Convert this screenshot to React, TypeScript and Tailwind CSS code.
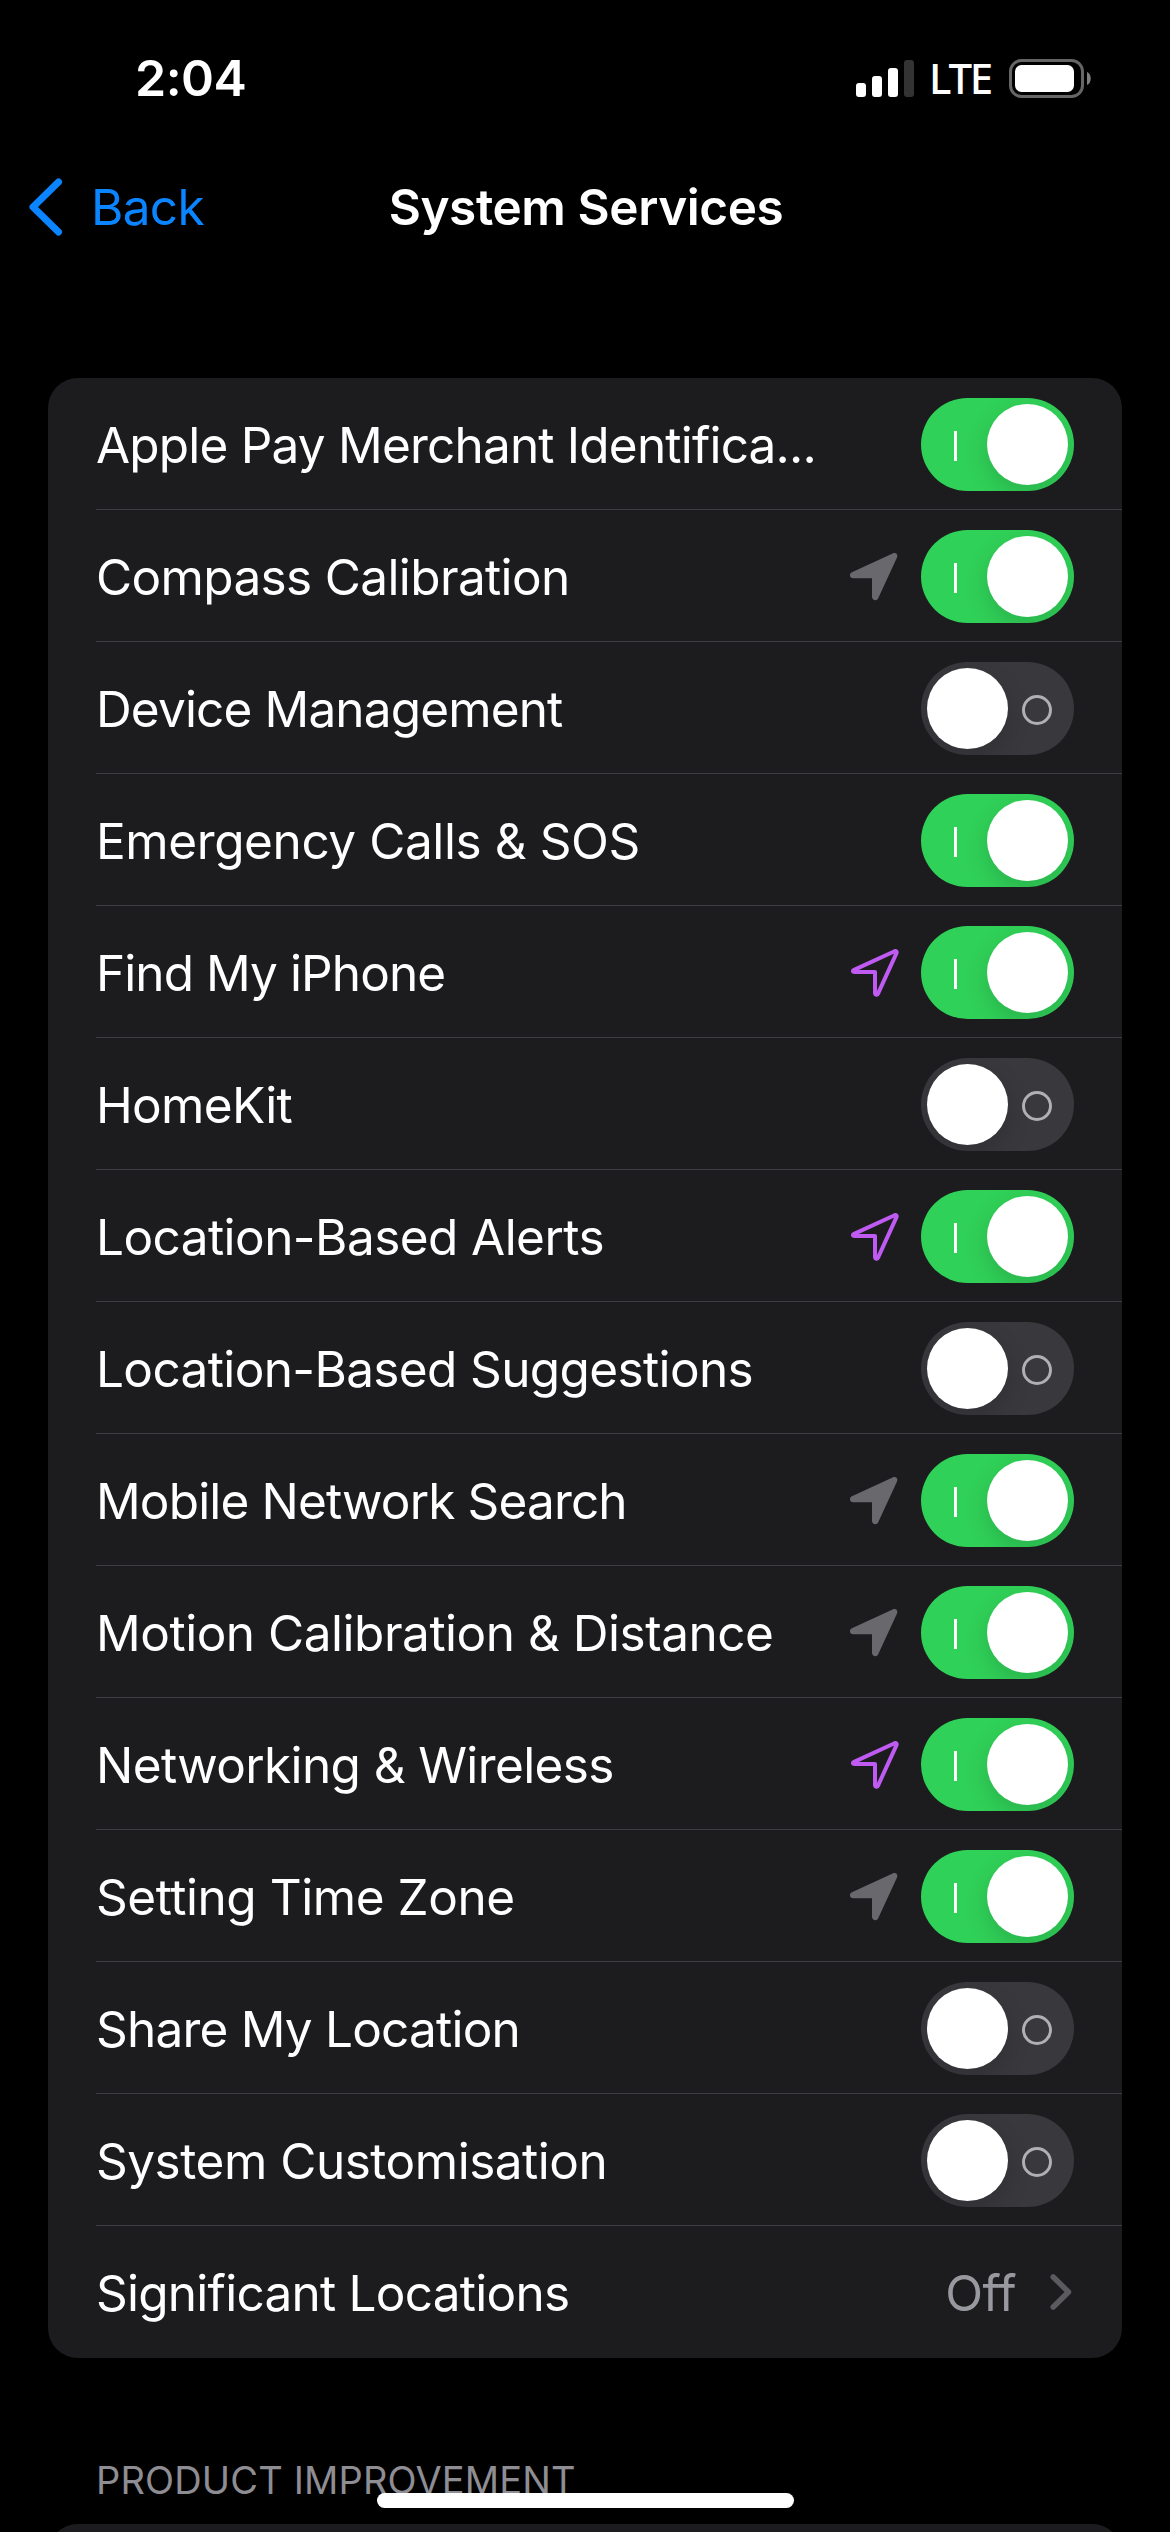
type Arrow = "none" | "gray" | "purple";

interface Service {
  label: string;
  tracking: string;
  on: boolean;
  arrow?: Arrow;
}

const services: Service[] = [
  { label: "Apple Pay Merchant Identifica...", tracking: "tracking-[-0.8px]", on: true },
  { label: "Compass Calibration", tracking: "tracking-[-0.64px]", on: true, arrow: "gray" },
  { label: "Device Management", tracking: "tracking-[-0.85px]", on: false },
  { label: "Emergency Calls & SOS", tracking: "tracking-[-0.41px]", on: true },
  { label: "Find My iPhone", tracking: "tracking-[-0.92px]", on: true, arrow: "purple" },
  { label: "HomeKit", tracking: "tracking-[-0.7px]", on: false },
  { label: "Location-Based Alerts", tracking: "tracking-[-0.56px]", on: true, arrow: "purple" },
  { label: "Location-Based Suggestions", tracking: "tracking-[-0.63px]", on: false },
  { label: "Mobile Network Search", tracking: "tracking-[-0.85px]", on: true, arrow: "gray" },
  { label: "Motion Calibration & Distance", tracking: "tracking-[-0.48px]", on: true, arrow: "gray" },
  { label: "Networking & Wireless", tracking: "tracking-[-0.62px]", on: true, arrow: "purple" },
  { label: "Setting Time Zone", tracking: "tracking-[-0.45px]", on: true, arrow: "gray" },
  { label: "Share My Location", tracking: "tracking-[-0.79px]", on: false },
  { label: "System Customisation", tracking: "tracking-[-0.48px]", on: false },
];

function LocationArrow({ kind }: { kind: Arrow }) {
  if (kind === "gray") {
    return (
      <svg className="mr-[23px] mt-[3px] h-12 w-12 shrink-0" viewBox="0 0 48 48" fill="#69686d">
        <path d="M1.9 19.300 42.600.4c3.200-1.400 5.800 1 4.300 4.300L28.200 45.200c-1.500 3.200-6.200 2.400-6.200-1.500V25.200H3.100C-.7 25.200-1 20.700 1.900 19.300Z" />
      </svg>
    );
  }
  return (
    <svg
      className="mr-[22px] mt-[3px] h-12 w-12 shrink-0"
      viewBox="0 0 48 48"
      fill="none"
      stroke="#bf5af2"
      strokeWidth="4"
      strokeLinejoin="round"
    >
      <path d="M3.100 20.900 43.600 2.200c1.400-.6 2.500.4 1.900 1.900L26.900 44.800c-.8 1.600-2.900 1.100-2.900-.7V23H3.400c-1.800 0-1.900-1.400-.3-2.100Z" />
    </svg>
  );
}

function Toggle({ on }: { on: boolean }) {
  if (on) {
    return (
      <div className="mt-0.5 flex h-[93px] w-[153px] shrink-0 items-center justify-between overflow-hidden rounded-full bg-[#30d158] pl-[33px] pr-1.5">
        <span className="mt-[3px] h-[30px] w-[3px] bg-white" />
        <span className="h-[81px] w-[81px] rounded-full bg-white shadow-[0_9px_24px_rgba(0,0,0,0.15)]" />
      </div>
    );
  }
  return (
    <div className="mt-0.5 flex h-[93px] w-[153px] shrink-0 items-center justify-between overflow-hidden rounded-full bg-[#39383d] pl-1.5 pr-[22px]">
      <span className="h-[81px] w-[81px] rounded-full bg-white shadow-[0_9px_24px_rgba(0,0,0,0.15)]" />
      <span className="mt-[3px] h-[30px] w-[30px] rounded-full border-[3px] border-[#b0b0b2]" />
    </div>
  );
}

function ServiceRow({ label, tracking, on, arrow = "none" }: Service) {
  return (
    <li className="ml-12 flex h-[132px] items-center border-b border-[#3d3d41] pr-12">
      <span className={`mt-[3px] grow whitespace-nowrap text-[49.5px] leading-[60px] ${tracking}`}>{label}</span>
      {arrow !== "none" && <LocationArrow kind={arrow} />}
      <Toggle on={on} />
    </li>
  );
}

function StatusBar() {
  return (
    <header className="flex h-[156px] shrink-0 items-center justify-between pl-[135px] pr-[78px]">
      <span className="text-[50px] font-semibold leading-[60px] tracking-[-0.5px]">2:04</span>
      <div className="flex items-center">
        <div className="flex h-[37px] items-end gap-1.5">
          <span className="h-[14px] w-[10px] rounded-[3px] bg-white" />
          <span className="h-[21px] w-[10px] rounded-[3px] bg-white" />
          <span className="h-[29px] w-[10px] rounded-[3px] bg-white" />
          <span className="h-[37px] w-[10px] rounded-[3px] bg-[#333333]" />
        </div>
        <span className="ml-[15px] w-[80px] font-['Noto_Sans',sans-serif] text-[42px] font-medium leading-[60px] tracking-[-2.2px]">
          LTE
        </span>
        <svg className="h-[39px] w-[83px]" viewBox="0 0 83 39">
          <rect x="1.500" y="1.500" width="72" height="36" rx="11" fill="none" stroke="#666" strokeWidth="3" />
          <rect x="6" y="6" width="59" height="27" rx="6.500" fill="#fff" />
          <path d="M78 13c5 2 5 11 0 13Z" fill="#7f7f7f" />
        </svg>
      </div>
    </header>
  );
}

function NavBar() {
  return (
    <nav className="grid h-[102px] shrink-0 grid-cols-[1fr_auto_1fr] items-center">
      <a className="flex items-center pl-[29px] text-[#0a84ff]">
        <svg
          className="h-[58px] w-[34px]"
          viewBox="0 0 34 58"
          fill="none"
          stroke="#0a84ff"
          strokeWidth="7"
          strokeLinecap="round"
          strokeLinejoin="round"
        >
          <path d="M29.500 4 4 29l25.500 25" />
        </svg>
        <span className="ml-7 text-[49.5px] leading-[60px] tracking-[-0.67px]">Back</span>
      </a>
      <h1 className="pl-0.5 text-[49.5px] font-semibold leading-[60px] tracking-[-0.42px]">System Services</h1>
    </nav>
  );
}

export default function App() {
  return (
    <div className="relative flex h-[2532px] w-[1170px] flex-col overflow-hidden bg-black font-['Inter',sans-serif] text-white">
      <StatusBar />
      <NavBar />
      <main className="mt-[120px] shrink-0 px-12">
        <ul className="overflow-hidden rounded-[30px] bg-[#1c1c1e]">
          {services.map((s) => (
            <ServiceRow key={s.label} {...s} />
          ))}
          <li className="ml-12 flex h-[132px] items-center pr-[50px]">
            <span className="mt-0.5 grow text-[49.5px] leading-[60px] tracking-[-0.75px]">Significant Locations</span>
            <span className="mt-0.5 text-[49.5px] leading-[60px] tracking-[-0.6px] text-[#98989f]">Off</span>
            <svg
              className="ml-[34px] h-10 w-[22px]"
              viewBox="0 0 22 40"
              fill="none"
              stroke="#5a5a5f"
              strokeWidth="5.500"
              strokeLinecap="round"
              strokeLinejoin="round"
            >
              <path d="M3.200 5 18.500 20 3.200 35" />
            </svg>
          </li>
        </ul>
        <h2 className="mt-[98px] pl-12 text-[38px] leading-[48px] tracking-[0.15px] text-[#8d8d93]">
          PRODUCT IMPROVEMENT
        </h2>
        <div className="mt-5 h-20 rounded-t-[30px] bg-[#1c1c1e]" />
      </main>
      <div className="absolute bottom-6 left-[377px] h-[15px] w-[417px] rounded-full bg-white" />
    </div>
  );
}
